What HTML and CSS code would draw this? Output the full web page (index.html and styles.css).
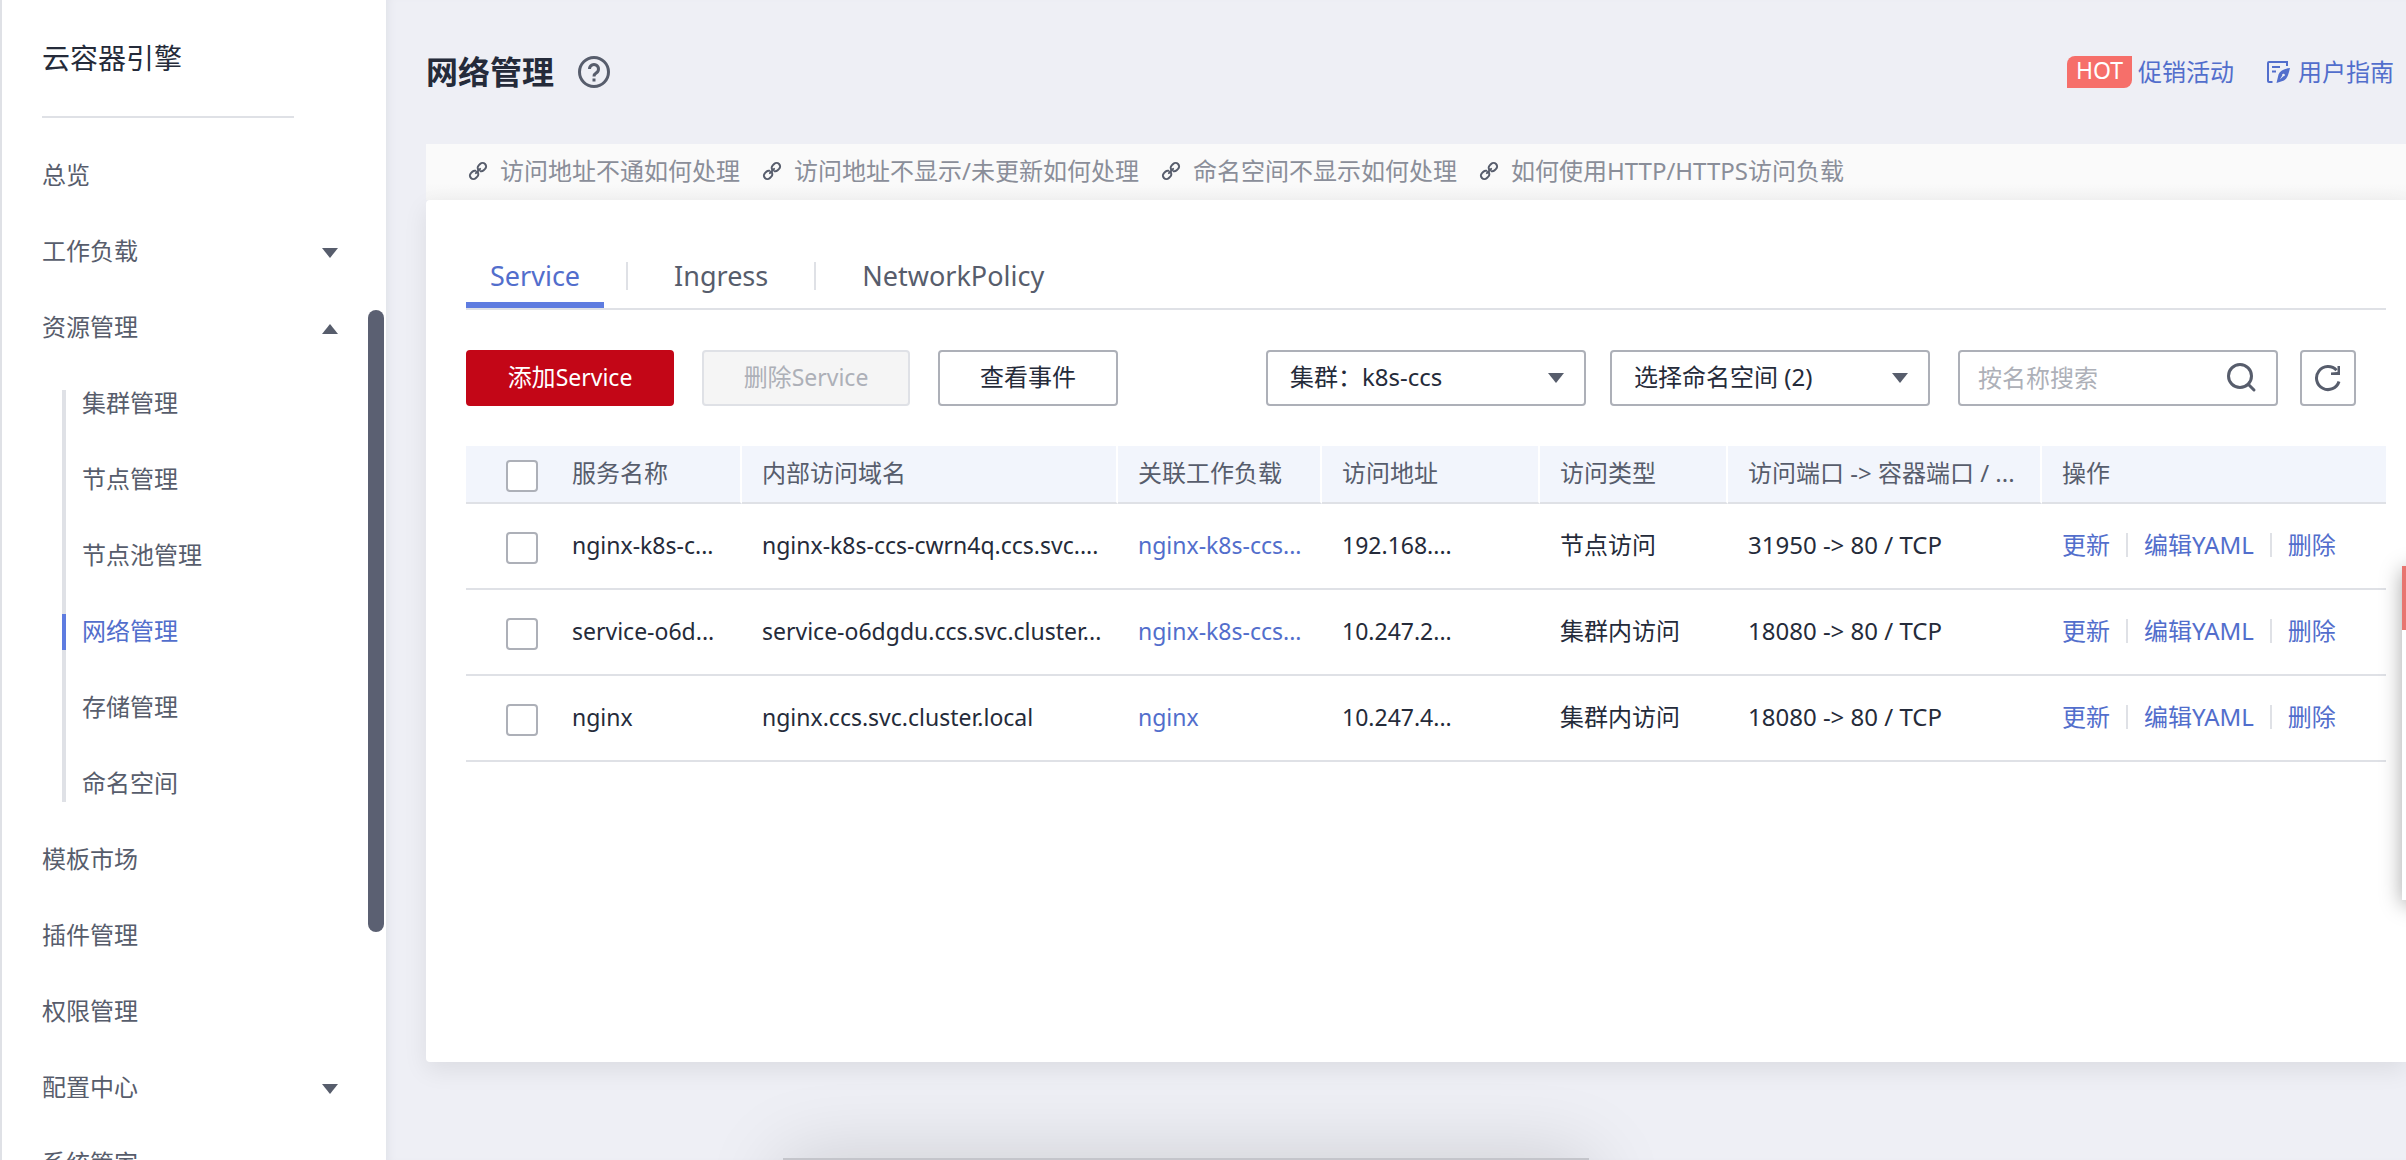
FILE: index.html
```html
<!DOCTYPE html>
<html lang="zh-CN">
<head>
<meta charset="utf-8">
<title>网络管理 - 云容器引擎</title>
<link rel="stylesheet" href="styles.css">
</head>
<body>
<svg class="sprite" aria-hidden="true">
  <symbol id="link" viewBox="0 0 20 20"><g fill="none" stroke="currentColor" stroke-width="2" stroke-linecap="round" transform="rotate(-45 10 10)"><path d="M9 10a3.500 3.500 0 0 1-3.500 3.500h-2a3.500 3.500 0 0 1 0-7h2c1.200 0 2.300.6 2.900 1.500"/><path d="M11 10a3.500 3.500 0 0 1 3.500-3.500h2a3.500 3.500 0 0 1 0 7h-2c-1.200 0-2.300-.6-2.900-1.500"/><path d="M7 10h6"/></g></symbol>
</svg>
<div class="app">
  <nav class="sidebar" aria-label="云容器引擎">
    <h2 class="product">云容器引擎</h2>
    <ul class="menu">
      <li><a class="item" href="#">总览</a></li>
      <li><button class="item" type="button" aria-expanded="false">工作负载<span class="caret"></span></button></li>
      <li><button class="item" type="button" aria-expanded="true">资源管理<span class="caret up"></span></button>
        <ul class="submenu">
          <li><a class="item" href="#">集群管理</a></li>
          <li><a class="item" href="#">节点管理</a></li>
          <li><a class="item" href="#">节点池管理</a></li>
          <li><a class="item active" href="#" aria-current="page">网络管理</a></li>
          <li><a class="item" href="#">存储管理</a></li>
          <li><a class="item" href="#">命名空间</a></li>
        </ul>
      </li>
      <li><a class="item" href="#">模板市场</a></li>
      <li><a class="item" href="#">插件管理</a></li>
      <li><a class="item" href="#">权限管理</a></li>
      <li><button class="item" type="button" aria-expanded="false">配置中心<span class="caret"></span></button></li>
      <li><a class="item" href="#">系统管家</a></li>
    </ul>
    <div class="scroll-thumb"></div>
  </nav>

  <main class="main">
    <header class="page-head">
      <h1>网络管理</h1>
      <button class="help" type="button" aria-label="帮助">
        <svg width="32" height="32" viewBox="0 0 32 32" fill="none" stroke="currentColor" stroke-width="3"><circle cx="16" cy="16" r="14.500"/><path d="M11.500 13a4.500 4.500 0 1 1 6.800 3.900c-1.600 1-2.300 1.700-2.300 3.600"/><path d="M16 22.500v3"/></svg>
      </button>
      <div class="head-links">
        <a class="promo" href="#"><span class="hot">HOT</span>促销活动</a>
        <a class="guide" href="#">
          <svg width="24" height="24" viewBox="0 0 24 24" fill="none" stroke="currentColor" stroke-width="2"><path d="M6.500 22H3a1 1 0 0 1-1-1V3a1 1 0 0 1 1-1h18v4M6 7h8M6 11.500h4"/><path fill="currentColor" fill-rule="evenodd" stroke="none" d="M24 8c-6 .8-10 3-11.500 6.500L10.500 23l7.500-2.500c3-1.500 4.500-6 6-12.500zM13.800 19.500l2.500-4a1.300 1.300 0 1 1 1.200.8z"/></svg>用户指南</a>
      </div>
    </header>

    <div class="faq">
      <a href="#"><svg width="20" height="20"><use href="#link"/></svg>访问地址不通如何处理</a>
      <a href="#"><svg width="20" height="20"><use href="#link"/></svg>访问地址不显示/未更新如何处理</a>
      <a href="#"><svg width="20" height="20"><use href="#link"/></svg>命名空间不显示如何处理</a>
      <a href="#"><svg width="20" height="20"><use href="#link"/></svg>如何使用HTTP/HTTPS访问负载</a>
    </div>

    <section class="card">
      <div class="tabs" role="tablist">
        <button class="tab selected" type="button" role="tab" aria-selected="true">Service</button>
        <span class="divider"></span>
        <button class="tab" type="button" role="tab" aria-selected="false">Ingress</button>
        <span class="divider"></span>
        <button class="tab" type="button" role="tab" aria-selected="false">NetworkPolicy</button>
      </div>

      <div class="toolbar">
        <button class="btn primary" type="button">添加<span class="latin">Service</span></button>
        <button class="btn" type="button" disabled>删除<span class="latin">Service</span></button>
        <button class="btn events" type="button">查看事件</button>
        <div class="filters">
          <div class="select"><select aria-label="集群"><option>集群：k8s-ccs</option></select><span class="caret"></span></div>
          <div class="select"><select aria-label="命名空间"><option>选择命名空间 (2)</option></select><span class="caret"></span></div>
        </div>
        <div class="lookup">
          <div class="search">
            <input type="text" placeholder="按名称搜索" aria-label="按名称搜索">
            <button type="button" aria-label="搜索"><svg width="32" height="32" viewBox="0 0 32 32" fill="none" stroke="currentColor" stroke-width="3" stroke-linecap="round"><circle cx="14" cy="14" r="11.500"/><path d="M22.500 22.500 28 28"/></svg></button>
          </div>
          <button class="refresh" type="button" aria-label="刷新"><svg width="28" height="28" viewBox="0 0 28 28" fill="none" stroke="currentColor" stroke-width="3"><path d="M25 17.500A11.500 11.500 0 1 1 22.500 6.300"/><path fill="currentColor" stroke="none" d="M26 2v9h-9v-2.500L23.500 8V2z"/></svg></button>
        </div>
      </div>

      <table>
        <colgroup><col class="c-check"><col class="c-name"><col class="c-domain"><col class="c-load"><col class="c-addr"><col class="c-type"><col class="c-port"><col></colgroup>
        <thead>
          <tr><th class="check"><input type="checkbox" aria-label="全选"></th><th>服务名称</th><th>内部访问域名</th><th>关联工作负载</th><th>访问地址</th><th>访问类型</th><th>访问端口 -&gt; 容器端口 / ...</th><th>操作</th></tr>
        </thead>
        <tbody>
          <tr><td class="check"><input type="checkbox" aria-label="选择 nginx-k8s-ccs"></td><td class="latin">nginx-k8s-c...</td><td class="latin">nginx-k8s-ccs-cwrn4q.ccs.svc....</td><td class="latin"><a href="#">nginx-k8s-ccs...</a></td><td class="latin">192.168....</td><td>节点访问</td><td>31950 -&gt; 80 / TCP</td><td><div class="actions"><a href="#">更新</a><a href="#">编辑YAML</a><a href="#">删除</a></div></td></tr>
          <tr><td class="check"><input type="checkbox" aria-label="选择 service-o6dgdu"></td><td class="latin">service-o6d...</td><td class="latin">service-o6dgdu.ccs.svc.cluster...</td><td class="latin"><a href="#">nginx-k8s-ccs...</a></td><td class="latin">10.247.2...</td><td>集群内访问</td><td>18080 -&gt; 80 / TCP</td><td><div class="actions"><a href="#">更新</a><a href="#">编辑YAML</a><a href="#">删除</a></div></td></tr>
          <tr><td class="check"><input type="checkbox" aria-label="选择 nginx"></td><td class="latin">nginx</td><td class="latin">nginx.ccs.svc.cluster.local</td><td class="latin"><a href="#">nginx</a></td><td class="latin">10.247.4...</td><td>集群内访问</td><td>18080 -&gt; 80 / TCP</td><td><div class="actions"><a href="#">更新</a><a href="#">编辑YAML</a><a href="#">删除</a></div></td></tr>
        </tbody>
      </table>
    </section>
  </main>
</div>
<aside class="side-widget"></aside>
<div class="bottom-panel"></div>
</body>
</html>
```
FILE: styles.css
```css
* { box-sizing: border-box; }

body {
  margin: 0;
  overflow: hidden;
  background: #eeeff5;
  color: #252b3a;
  font: 24px/36px "Noto Sans", "Noto Sans CJK SC", sans-serif;
}

a { color: #526ecc; text-decoration: none; }
button, input, select { margin: 0; padding: 0; border: 0; background: none; color: inherit; font: inherit; }
ul { margin: 0; padding: 0; list-style: none; }
svg { display: block; flex: none; }
.sprite { position: absolute; width: 0; height: 0; }
.latin { font-size: 23px; }

.app { display: flex; height: 100vh; }

/* Sidebar */
.sidebar {
  position: relative;
  flex: none;
  width: 386px;
  overflow: hidden;
  border-left: 2px solid #dfe1e6;
  background: #fff;
}
.product {
  width: 252px;
  margin: 0 0 20px 40px;
  border-bottom: 2px solid #dfe1e6;
  font-size: 28px;
  font-weight: 400;
  line-height: 116px;
}
.item {
  display: flex;
  align-items: center;
  justify-content: space-between;
  width: 100%;
  height: 76px;
  padding: 0 48px 2px 40px;
  color: #575d6c;
}
.submenu { position: relative; }
.submenu .item { position: relative; padding-left: 80px; }
.submenu::before {
  content: "";
  position: absolute;
  top: 24px;
  bottom: 20px;
  left: 60px;
  width: 4px;
  background: #dfe1e6;
}
.submenu .active { color: #526ecc; }
.submenu .active::before {
  content: "";
  position: absolute;
  top: 20px;
  bottom: 20px;
  left: 60px;
  width: 4px;
  background: #5e7ce0;
}
.caret {
  flex: none;
  border: 8px solid transparent;
  border-top: 10px solid #575d6c;
  border-bottom: 0;
}
.caret.up { border-top: 0; border-bottom: 10px solid #575d6c; }
.item .caret { margin-top: 4px; }
.scroll-thumb {
  position: absolute;
  top: 310px;
  right: 2px;
  width: 16px;
  height: 622px;
  border-radius: 8px;
  background: #5b6072;
}

/* Page frame */
.main {
  display: flex;
  flex: 1;
  flex-direction: column;
  min-width: 0;
  padding: 0 0 98px 40px;
  box-shadow: inset 8px 0 8px -6px #dfe1e8;
}
.page-head { display: flex; align-items: center; height: 144px; padding-right: 12px; }
h1 { margin: 0 24px 0 0; font-size: 32px; font-weight: 700; line-height: 48px; }
.help { color: #575d6c; }
.head-links { display: flex; gap: 32px; margin-left: auto; }
.promo, .guide { display: flex; align-items: center; gap: 6px; }
.guide { gap: 8px; }
.hot {
  padding: 0 9px 4px;
  border-radius: 8px 0;
  background: #f66f6a;
  color: #fff;
  font-size: 23px;
  line-height: 28px;
}
.faq {
  display: flex;
  align-items: center;
  gap: 22px;
  height: 56px;
  padding: 0 0 2px 42px;
  background: linear-gradient(#fafafa 70%, #f4f4f4);
}
.faq a { display: flex; align-items: center; gap: 12px; color: #8a8e99; }
.faq svg { color: #575d6c; }

/* Card */
.card {
  flex: 1;
  padding: 44px 20px 0 40px;
  border-radius: 4px 0 0 4px;
  background: #fff;
  box-shadow: 0 8px 24px rgba(0, 0, 0, .08);
}
.tabs {
  display: flex;
  align-items: center;
  gap: 22px;
  height: 66px;
  border-bottom: 2px solid #dfe1e6;
}
.tab {
  height: 64px;
  padding: 0 24px;
  border: solid transparent;
  border-width: 6px 0;
  color: #575d6c;
  font-size: 27px;
}
.tab.selected { border-bottom-color: #5e7ce0; color: #526ecc; }
.divider { width: 2px; height: 28px; background: #dfe1e6; }

.toolbar { display: flex; gap: 28px; margin: 40px 30px 40px 0; }
.btn {
  flex: none;
  width: 208px;
  height: 56px;
  padding-bottom: 2px;
  border: 2px solid #adb0b8;
  border-radius: 4px;
}
.btn.primary { border-color: #c30617; background: #c30617; color: #fff; }
.btn:disabled { border-color: #dfe1e6; background: #f5f5f5; color: #adb0b8; }
.btn.events { width: 180px; }
.filters { display: flex; gap: 24px; margin-left: auto; }
.lookup { display: flex; gap: 22px; }
.select, .search {
  display: flex;
  align-items: center;
  width: 320px;
  height: 56px;
  border: 2px solid #adb0b8;
  border-radius: 4px;
}
.select { padding-right: 20px; }
.select select { flex: 1; height: 52px; padding: 0 0 2px 22px; appearance: none; }
.search { padding: 0 18px; }
.search input { flex: 1; min-width: 0; height: 52px; padding-bottom: 2px; }
.search input::placeholder { color: #adb0b8; opacity: 1; }
.search button { color: #575d6c; }
.refresh {
  display: grid;
  place-items: center;
  width: 56px;
  height: 56px;
  border: 2px solid #adb0b8;
  border-radius: 4px;
  color: #575d6c;
}

/* Service table */
table { width: 100%; border-collapse: separate; border-spacing: 0; table-layout: fixed; }
.c-check { width: 86px; }
.c-name { width: 190px; }
.c-domain { width: 376px; }
.c-load { width: 204px; }
.c-addr { width: 218px; }
.c-type { width: 188px; }
.c-port { width: 314px; }
th, td {
  height: 86px;
  padding: 0 0 2px 20px;
  border-bottom: 2px solid #dfe1e6;
  font-weight: 400;
  text-align: left;
  white-space: nowrap;
}
th { height: 58px; border-right: 2px solid #fff; background: #f2f5fc; color: #575d6c; }
th.check, th:last-child { border-right: 0; }
.check { padding: 4px 0 0 40px; }
input[type="checkbox"] {
  display: block;
  width: 32px;
  height: 32px;
  border: 2px solid #adb0b8;
  border-radius: 4px;
  background: #fff;
  appearance: none;
}
.actions { display: flex; align-items: center; }
.actions a + a::before {
  content: "";
  display: inline-block;
  width: 2px;
  height: 24px;
  margin: 0 16px;
  background: #dfe1e6;
  vertical-align: -3px;
}

/* Floating pieces that run past the window's edges */
.side-widget {
  position: fixed;
  top: 566px;
  right: -76px;
  width: 80px;
  height: 334px;
  border-top: 64px solid #e87570;
  background: #fff;
  box-shadow: 0 4px 20px rgba(0, 0, 0, .35);
}
.bottom-panel {
  position: fixed;
  bottom: -198px;
  left: 50%;
  width: 806px;
  height: 200px;
  margin-left: -420px;
  background: #c4c5cb;
  box-shadow: 0 0 80px rgba(0, 0, 0, .15);
}
```
